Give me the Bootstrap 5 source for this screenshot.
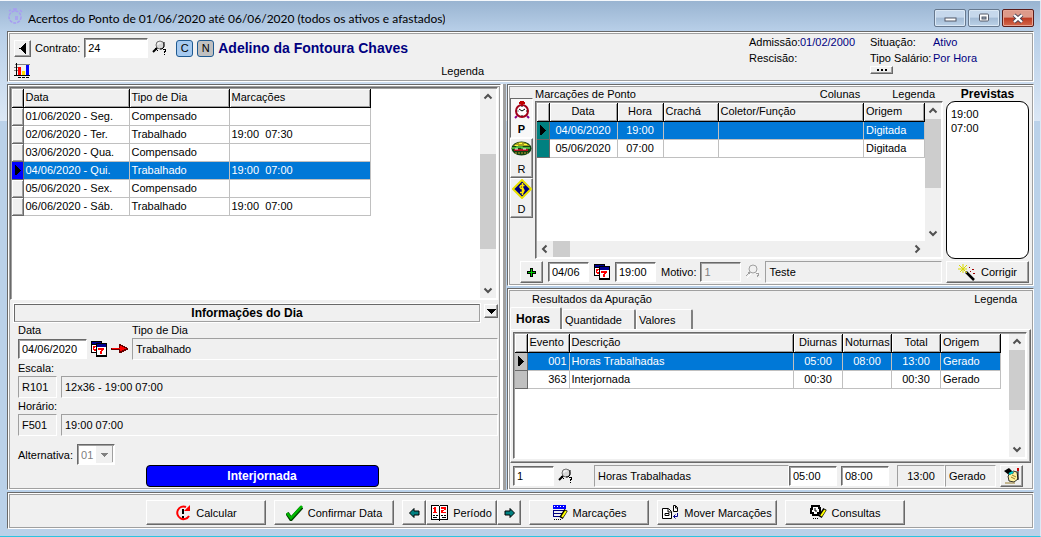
<!DOCTYPE html>
<html lang="pt-BR">
<head>
<meta charset="utf-8">
<meta name="viewport" content="width=device-width, initial-scale=1">
<title>Acertos do Ponto</title>
<link href="https://cdn.jsdelivr.net/npm/bootstrap@5.3.0/dist/css/bootstrap.min.css" rel="stylesheet">
<script src="https://cdn.jsdelivr.net/npm/bootstrap@5.3.0/dist/js/bootstrap.bundle.min.js" defer></script>
<style>
:root{--face:#f0f0f0;--mid:#a0a0a0;--dark:#696969;--sel:#0078d7}
body{font:11px/16px "Liberation Sans",Arial,sans-serif;color:#000;background:#bad1e9}
svg{display:block;flex:none}
.px{shape-rendering:crispEdges}
.win{min-height:100vh;gap:2px;padding:0 6px 7px 7px;border-top:1px solid #f4f8fc;border-bottom:1px solid #2bc4e0;border-right:1px solid #dce8f4;
 background:linear-gradient(#99b4d1 0,#b8cfe8 30px,#dbe7f5 120px,#bad1e9 120px)}
.titlebar{height:28px}
.titlebar h1{font:12px/16px Lato,"Noto Sans",sans-serif}
.caps{gap:2px;padding-top:6px}
.cap{width:32px;height:18px;padding:0;border:1px solid #66788e;border-radius:2px;box-shadow:inset 0 0 0 1px #dbe8f5;
 background:linear-gradient(#c6d8ec 45%,#a3bbd5 50%,#bcd2e8)}
.cap-x{border-color:#5c1d1a;box-shadow:inset 0 0 0 1px #e6a595;background:linear-gradient(#dd9a8a 45%,#bd3a22 50%,#d3694c)}
.panel{background:var(--face);border:1px solid;border-color:var(--dark) #fff #fff var(--dark);padding:2px;
 box-shadow:inset 1px 1px #fff,inset -1px -1px var(--mid),inset 2px 2px var(--mid)}
.navy{color:#000080}
.btn3d{background:var(--face);border:1px solid;border-color:#fff var(--dark) var(--dark) #fff;box-shadow:inset -1px -1px var(--mid);
 padding:0;color:#000;display:inline-flex;align-items:center;justify-content:center;gap:5px;flex:none}
.fld{height:20px;min-width:0;border:1px solid;border-color:var(--dark) #fff #fff var(--dark);box-shadow:inset 1px 1px var(--mid);
 border-radius:0;padding:0 3px;background:#fff;color:#000;outline-offset:-2px}
.fld.off{background:var(--face);color:#808080}
.ro{height:22px;min-width:0;background:var(--face);border:1px solid;border-color:var(--mid) #fff #fff var(--mid);padding:0 3px;color:#000}
.badge-key{width:17px;height:17px;line-height:15px;border:1px solid #1f5a91;border-radius:3px;text-align:center;background:#a6caf0;flex:none}
.badge-key.gray{background:#c0c0c0}
.person{font-size:14px;font-weight:700;line-height:18px}
.head-left{width:48%}
.facts{grid-template:16px 16px 13px/51px 70px 63px 98px}
.middle{display:grid;grid-template-columns:minmax(0,494fr) 6px minmax(0,527fr);flex:1 1 auto}
.split{background:var(--mid);border-left:2px solid #fff;margin-right:1px}
.stack{gap:2px}
.stack>.panel{flex:1 1 0}
.sunk{background:#fff;border:1px solid;border-color:var(--dark) #fff #fff var(--dark);box-shadow:inset 1px 1px var(--mid);padding:1px}
.dbgrid{border-collapse:collapse;table-layout:fixed;line-height:17px}
.dbgrid th{height:18px;background:var(--face);font-weight:400;border-right:1px solid #000;border-bottom:1px solid #000;padding:0 2px;
 box-shadow:inset 1px 1px #fff,inset -1px -1px var(--mid);white-space:nowrap;overflow:hidden}
.dbgrid td{height:18px;padding:0 2px;border-right:1px solid silver;border-bottom:1px solid silver;white-space:nowrap;overflow:hidden}
.dbgrid td:first-child{background:var(--face);border-color:var(--dark);padding:0;box-shadow:inset 1px 1px #fff,inset -1px -1px var(--mid)}
.dbgrid tr.on td:not(:first-child){background:var(--sel);color:#fff}
.dbgrid .teal td:first-child{background:#008080;box-shadow:none}
.dbgrid .blue td:first-child{background:#00f;box-shadow:none}
.dbgrid .silver td:first-child{background:silver;box-shadow:none}
.mark-row{margin-left:3px}
.sb{width:16px;background:var(--face);display:flex;flex-direction:column;align-items:center;flex:none}
.sb span{flex:1 1 auto;width:16px}
.sb i,.hsb i{display:block;background:#cdcdcd}
.sb svg{height:16px}
.hsb{height:16px;background:var(--face);display:flex;align-items:center}
.strip{width:23px;flex:none;padding-top:11px}
.strip .btn3d{width:23px;height:40px;flex-direction:column;gap:0;justify-content:space-between}
.strip .btn3d.down{background:#f8f8f8;border-color:var(--dark) #fff #fff var(--dark);box-shadow:none;font-weight:700}
.gridcol{min-width:0;margin-left:2px}
.toprow{line-height:14px}
.prev{width:83px;flex:none;margin:0 2px 0 3px}
.memo{border:1px solid #000;border-radius:9px;background:#fff;line-height:14px;padding:5px 4px;resize:none;width:100%;color:#000;overflow:hidden}
.entry{gap:5px;padding:2px 2px 0 10px}
.result{gap:4px;padding:2px 8px 0 3px}
.infobar{height:18px;border:1px solid;border-color:var(--dark) var(--mid) var(--mid) var(--dark);box-shadow:0 0 0 1px #fff;line-height:16px}
.strong{font-size:12px;font-weight:700}
.pill{background:#00f;color:#fff;border:1px solid #000;border-radius:4px;width:233px;height:22px;line-height:20px}
.reshead{padding:0 14px 0 22px}
.tabs button{background:var(--face);border:0;border-top:1px solid #fff;border-left:1px solid #fff;border-right:2px solid #808080;padding:0 2px;height:20px;text-align:left;color:#000;border-radius:2px 2px 0 0}
.tabs button.active{height:22px;font-weight:700;font-size:12px;padding-left:5px}
.tabpage{border:1px solid;border-color:#fff var(--dark) var(--dark) #fff;box-shadow:inset -1px -1px var(--mid);padding:2px 3px 3px 2px}
.combo{height:21px;width:38px;border:1px solid;border-color:var(--dark) #fff #fff var(--dark);box-shadow:inset 1px 1px var(--mid);border-radius:0;appearance:none;color:#808080;padding:0 3px;opacity:1;
 background:#fff url("data:image/svg+xml,%3Csvg xmlns='http://www.w3.org/2000/svg' width='17' height='17' shape-rendering='crispEdges'%3E%3Cpath fill='%23f0f0f0' d='M0 0h17v17H0z'/%3E%3Cpath fill='%23a0a0a0' d='M0 16h17V0h-1v16z'/%3E%3Cpath fill='%23808080' d='M5 7h7L8.500 11z'/%3E%3C/svg%3E") right 1px center no-repeat}
.footbar{padding:7px 2px 3px 12px}
.act{width:120px;height:25px}
.nudge{width:24px;height:25px}
.per{width:71px;height:25px}
.w-hdr{width:64px}.w-day{width:41px}.w-date{width:69px}.w-code{width:39px}.w-hour{width:48px}.w-org{width:51px}
.sq{width:23px;height:22px}
</style>
</head>
<body>
<svg width="0" height="0" class="position-absolute" aria-hidden="true">
 <symbol id="mag" viewBox="0 0 16 16"><circle cx="8" cy="5" r="4" fill="#d8d8d8" stroke="#707070"/><path d="M6 5V3h3" stroke="#fff" fill="none"/><path d="M12 2v5l-2 2H8" stroke="#000" fill="none"/><path d="M5 8l-4 4" stroke="#000" stroke-width="2"/><path d="M3 8l3 3" stroke="#000"/><path d="M11 9h3v3h-1v1h-1v-2h1v-1h-2zM12 14h1v1h-1z"/></symbol>
 <symbol id="magoff" viewBox="0 0 16 16"><circle cx="8" cy="5" r="4" fill="#f0f0f0" stroke="#a0a0a0"/><path d="M5 8l-4 4m2-4l3 3" stroke="#a0a0a0" fill="none"/><path d="M11 9h3v3h-1v1h-1v-2h1v-1h-2z" fill="#a0a0a0"/><path d="M12 9l1-2M2 14l4-4m7 5h3" stroke="#fff"/></symbol>
 <symbol id="cal" viewBox="0 0 16 16"><path d="M0 0h11v12H0z"/><path d="M1 4h4v7H1z" fill="#fff"/><path d="M1 1h9v2H1z" fill="#000090"/><path d="M2 5h3v1H4v1H3v1h2v2H3V9H2z" fill="red"/><path d="M5 2h11v14H5z"/><path d="M6 3h9v3H6z" fill="#000090"/><path d="M6 6h9v8H6z" fill="#fff"/><path d="M7 7h6v2h-1v1h-1v3H9v-3h1V9H7z" fill="red"/></symbol>
 <symbol id="up" viewBox="0 0 16 16"><path d="M4.500 9.500L8 6l3.500 3.500" fill="none" stroke="#505050" stroke-width="2"/></symbol>
 <symbol id="dn" viewBox="0 0 16 16"><path d="M4.500 6.500L8 10l3.500-3.500" fill="none" stroke="#505050" stroke-width="2"/></symbol>
 <symbol id="cur" viewBox="0 0 6 12"><path d="M0 1h1v1h1v1h1v1h1v1h1v1h1v1H5v1H4v1H3v1H2v1H0z"/></symbol>
</svg>
<div class="win d-flex flex-column">
 <div class="titlebar d-flex align-items-center gap-1">
  <svg width="17" height="17" viewBox="0 0 17 17" fill="none" stroke="#a79cf2" stroke-width="1.500"><circle cx="8" cy="10" r="6" stroke-dasharray="3 1"/><path d="M6 2h4M8 2v2M2 4l2-1M13 3l2 2M8 10h3M8 12h3"/></svg>
  <h1 class="mb-0 me-auto text-truncate pt-2">Acertos do Ponto de 01/06/2020 até 06/06/2020 (todos os ativos e afastados)</h1>
  <div class="caps d-flex">
   <button class="cap" aria-label="Minimizar"><svg class="m-auto" width="13" height="10"><rect x="1" y="5" width="11" height="3" fill="#fff" stroke="#555a68"/></svg></button>
   <button class="cap" aria-label="Maximizar"><svg class="m-auto" width="12" height="10"><rect x="1.500" y="1" width="9" height="7" rx="1" fill="#fff" stroke="#555a68"/><rect x="4" y="4" width="4" height="2" fill="#9ab" stroke="#555a68"/></svg></button>
   <button class="cap cap-x" aria-label="Fechar"><svg class="m-auto" width="14" height="11"><path d="M3 2l8 7M11 2L3 9" stroke="#4d4454" stroke-width="4"/><path d="M3 2l8 7M11 2L3 9" stroke="#fff" stroke-width="2.300"/></svg></button>
  </div>
 </div>

 <header class="panel d-flex">
  <div class="head-left d-flex flex-column ps-1">
   <div class="d-flex align-items-center pt-1">
    <button class="btn3d me-1" style="width:17px;height:17px" aria-label="Anterior"><svg class="px" width="7" height="11"><path d="M7 0v11H6v-1H5V9H4V8H3V7H2V6H0V5h2V4h1V3h1V2h1V1h1V0z"/></svg></button>
    <label for="contrato" class="me-1">Contrato:</label>
    <input id="contrato" class="fld w-hdr" value="24">
    <svg class="me-2 ms-1" width="16" height="16"><use href="#mag"/></svg>
    <span class="badge-key me-1">C</span><span class="badge-key gray me-1">N</span>
    <span class="person navy text-nowrap">Adelino da Fontoura Chaves</span>
   </div>
   <div class="d-flex justify-content-between mt-auto">
    <svg class="px mt-1" width="16" height="16"><path d="M1 1h15v1H1zM0 4h4v1H0zM0 7h4v1H0z" fill="#808080"/><path d="M2 0h1v13H2zM0 12h16v1H0zM4 14h3v1H4zM8 14h3v1H8zM12 14h3v1h-3z"/><path d="M4 4h3v8H4z" fill="red"/><path d="M8 8h3v4H8z" fill="#ffe000"/><path d="M12 2h3v10h-3z" fill="#00f"/></svg>
    <span class="pt-1 me-3">Legenda</span>
   </div>
  </div>
  <dl class="facts ms-auto mb-0 d-grid">
   <dt class="fw-normal">Admissão:</dt><dd class="mb-0 navy">01/02/2000</dd><dt class="fw-normal">Situação:</dt><dd class="mb-0 navy">Ativo</dd>
   <dt class="fw-normal">Rescisão:</dt><dd class="mb-0"></dd><dt class="fw-normal text-nowrap">Tipo Salário:</dt><dd class="mb-0 navy">Por Hora</dd>
   <dt></dt><dd class="mb-0"></dd><dt class="d-flex"><button class="btn3d" style="width:23px;height:8px" aria-label="Mais"><svg class="px" width="10" height="2"><path d="M0 0h2v2H0zM4 0h2v2H4zM8 0h2v2H8z"/></svg></button></dt><dd class="mb-0"></dd>
  </dl>
 </header>

 <main class="middle">
  <section class="panel d-flex flex-column">
   <div class="sunk d-flex flex-fill">
    <div class="flex-fill">
     <table class="dbgrid">
      <colgroup><col style="width:11px"><col style="width:106px"><col style="width:100px"><col style="width:141px"></colgroup>
      <thead><tr><th></th><th>Data</th><th>Tipo de Dia</th><th>Marcações</th></tr></thead>
      <tbody>
      <tr><td></td><td>01/06/2020 - Seg.</td><td>Compensado</td><td></td></tr>
      <tr><td></td><td>02/06/2020 - Ter.</td><td>Trabalhado</td><td>19:00&nbsp; 07:30</td></tr>
      <tr><td></td><td>03/06/2020 - Qua.</td><td>Compensado</td><td></td></tr>
      <tr class="on blue"><td><svg class="px mark-row" width="6" height="12"><use href="#cur"/></svg></td><td>04/06/2020 - Qui.</td><td>Trabalhado</td><td>19:00&nbsp; 07:00</td></tr>
      <tr><td></td><td>05/06/2020 - Sex.</td><td>Compensado</td><td></td></tr>
      <tr><td></td><td>06/06/2020 - Sáb.</td><td>Trabalhado</td><td>19:00&nbsp; 07:00</td></tr>
      </tbody>
     </table>
    </div>
    <div class="sb"><svg width="16"><use href="#up"/></svg><span class="d-flex flex-column"><b style="flex:50"></b><i style="flex:98"></i><b style="flex:34"></b></span><svg width="16"><use href="#dn"/></svg></div>
   </div>
   <div class="d-flex gap-1 pt-1 ps-1">
    <div class="infobar strong flex-fill text-center">Informações do Dia</div>
    <button class="btn3d" style="width:14px;height:14px" aria-label="Recolher"><svg class="px" width="9" height="5"><path d="M0 0h9v1H8v1H7v1H6v1H5v1H4V4H3V3H2V2H1V1H0z"/></svg></button>
   </div>
   <div class="ps-2">
    <div class="d-flex"><label for="data" style="width:114px">Data</label><label for="tipo">Tipo de Dia</label></div>
    <div class="d-flex align-items-center">
     <input id="data" class="fld w-date me-1" value="04/06/2020">
     <svg class="px me-1" width="16" height="16"><use href="#cal"/></svg>
     <svg class="px me-1" width="17" height="10"><path d="M0 4h8V0h2v1h2v1h2v1h2v1h1v2h-2v1h-2v1h-2v1H8V6H0z" fill="#600"/><path d="M1 4h8V2h2v1h2v1h2v1h-2v1h-2v1H9V5H1z" fill="red"/></svg>
     <input id="tipo" class="ro flex-fill" value="Trabalhado" readonly>
    </div>
    <label for="esc" class="d-block">Escala:</label>
    <div class="d-flex gap-1"><input id="esc" class="ro w-code" value="R101" readonly><input aria-label="Descrição da escala" class="ro flex-fill" value="12x36 - 19:00 07:00" readonly></div>
    <label for="hor" class="d-block">Horário:</label>
    <div class="d-flex gap-1"><input id="hor" class="ro w-code" value="F501" readonly><input aria-label="Descrição do horário" class="ro flex-fill" value="19:00 07:00" readonly></div>
    <div class="d-flex align-items-center pt-1 mt-1 gap-1"><label for="alt">Alternativa:</label><select id="alt" class="combo" disabled><option>01</option></select></div>
   </div>
   <div class="d-flex justify-content-center ps-3"><div class="pill strong text-center">Interjornada</div></div>
  </section>
  <div class="split"></div>
  <div class="stack d-flex flex-column">
   <section class="panel d-flex flex-column">
    <div class="d-flex flex-fill">
     <div class="strip">
      <button class="btn3d down"><svg width="18" height="20" viewBox="0 0 18 20"><path d="M4 17l-2 2M14 17l2 2" stroke="#808" stroke-width="2"/><circle cx="9" cy="12" r="6" fill="#fff" stroke="#a00018" stroke-width="2"/><path d="M6 4h6M7 3h4M9 3v3" stroke="#c00000" stroke-width="2"/><path d="M6 10l3 2 3-2M9 7v1M9 16v1M4.500 12h1M13 12h1" stroke="#000" fill="none"/></svg>P</button>
      <button class="btn3d"><svg width="21" height="18" viewBox="0 0 21 18"><ellipse cx="10.500" cy="9.500" rx="10" ry="7" fill="#104010"/><path d="M2 7q8-8 17 0z" fill="#a8a020"/><path d="M4 6h3v1H4zM8 4h3v1H8zM13 5h3v1h-3z" fill="#ff3"/><path d="M1 9h5v-1h5v1h8" stroke="#5fd34a" stroke-width="1.500" fill="none"/><path d="M3 11h14" stroke="#b01020" stroke-width="2"/><path d="M4 10h3M12 10h3" stroke="#fff"/><path d="M4 14h13" stroke="#c0a030" stroke-dasharray="2 1"/></svg>R</button>
      <button class="btn3d"><svg width="20" height="20" viewBox="0 0 20 20"><path d="M10 1l9 9-9 9-9-9z" fill="#000080" stroke="#e8e000" stroke-width="2"/><path d="M12.500 6.500H9l-1 1.500 1 1.500h2l1 2-1 2H8M10.500 4v12" stroke="#ffe800" stroke-width="1.500" fill="none"/></svg>D</button>
     </div>
     <div class="gridcol flex-fill d-flex flex-column">
      <div class="toprow d-flex"><span class="me-auto">Marcações de Ponto</span><span class="me-4">Colunas</span><span class="mx-2">Legenda</span></div>
      <div class="sunk flex-fill d-flex flex-column">
       <div class="d-flex flex-fill">
        <div class="flex-fill">
         <table class="dbgrid w-100">
          <colgroup><col style="width:12px"><col style="width:68px"><col style="width:46px"><col style="width:55px"><col><col style="width:61px"></colgroup>
          <thead><tr><th></th><th class="text-center">Data</th><th class="text-center">Hora</th><th>Crachá</th><th>Coletor/Função</th><th>Origem</th></tr></thead>
          <tbody>
          <tr class="on teal"><td><svg class="px mark-row" width="6" height="12"><use href="#cur"/></svg></td><td class="text-center">04/06/2020</td><td class="text-center">19:00</td><td></td><td></td><td>Digitada</td></tr>
          <tr class="teal"><td></td><td class="text-center">05/06/2020</td><td class="text-center">07:00</td><td></td><td></td><td>Digitada</td></tr>
          </tbody>
         </table>
        </div>
        <div class="sb"><svg width="16"><use href="#up"/></svg><span class="d-flex flex-column"><i style="flex:69"></i><b style="flex:37"></b></span><svg width="16"><use href="#dn"/></svg></div>
       </div>
       <div class="hsb"><svg width="16" height="16"><path d="M9.500 4.500L6 8l3.500 3.500" fill="none" stroke="#505050" stroke-width="2"/></svg><i style="width:17px;height:16px"></i><svg class="ms-auto me-3" width="16" height="16"><path d="M6.500 4.500L10 8l-3.500 3.500" fill="none" stroke="#505050" stroke-width="2"/></svg></div>
      </div>
     </div>
     <div class="prev d-flex flex-column"><label for="prev" class="toprow strong text-center">Previstas</label><textarea id="prev" class="memo flex-fill" readonly>19:00
07:00</textarea></div>
    </div>
    <div class="entry d-flex align-items-center">
     <button class="btn3d sq" aria-label="Incluir"><svg class="px" width="9" height="9"><path d="M3 0h3v3h3v3H6v3H3V6H0V3h3z"/><path d="M4 1h1v3h3v1H5v3H4V5H1V4h3z" fill="#0c0"/></svg></button>
     <input aria-label="Dia" class="fld w-day" value="04/06">
     <svg class="px" width="16" height="16"><use href="#cal"/></svg>
     <input aria-label="Hora" class="fld w-day" value="19:00">
     <div class="d-flex align-items-center flex-fill gap-1">
      <label for="mot">Motivo:</label><input id="mot" class="fld off w-day" value="1" disabled>
      <svg width="16" height="16"><use href="#magoff"/></svg>
      <input aria-label="Descrição do motivo" class="ro flex-fill" value="Teste" readonly>
      <button class="btn3d" style="width:83px;height:22px"><svg width="18" height="17"><path d="M8 8l8 8" stroke="#000" stroke-width="2.500"/><path d="M5 0v9M1 1l8 8M0 5h9M9 1L2 8" stroke="#d8d800"/><path d="M11 3h1v1h-1zM14 5h2v1h-2zM15 9h2v1h-2zM12 7h1v1h-1z" fill="#a00000"/></svg>Corrigir</button>
     </div>
    </div>
   </section>
   <section class="panel d-flex flex-column">
    <div class="reshead d-flex"><span class="me-auto">Resultados da Apuração</span><span>Legenda</span></div>
    <div class="tabs d-flex align-items-end"><button class="active" style="width:52px">Horas</button><button style="width:74px">Quantidade</button><button style="width:57px">Valores</button></div>
    <div class="tabpage flex-fill d-flex">
     <div class="sunk d-flex flex-fill">
      <div class="flex-fill pe-2">
       <table class="dbgrid w-100">
        <colgroup><col style="width:12px"><col style="width:42px"><col><col style="width:49px"><col style="width:49px"><col style="width:49px"><col style="width:60px"></colgroup>
        <thead><tr><th></th><th>Evento</th><th>Descrição</th><th class="text-center">Diurnas</th><th class="text-center">Noturnas</th><th class="text-center">Total</th><th>Origem</th></tr></thead>
        <tbody>
        <tr class="on silver"><td><svg class="px mark-row" width="6" height="12"><use href="#cur"/></svg></td><td class="text-end">001</td><td>Horas Trabalhadas</td><td class="text-center">05:00</td><td class="text-center">08:00</td><td class="text-center">13:00</td><td>Gerado</td></tr>
        <tr class="silver"><td></td><td class="text-end">363</td><td>Interjornada</td><td class="text-center">00:30</td><td></td><td class="text-center">00:30</td><td>Gerado</td></tr>
        </tbody>
       </table>
      </div>
      <div class="sb"><svg width="16"><use href="#up"/></svg><span class="d-flex flex-column"><i style="flex:60"></i><b style="flex:31"></b></span><svg width="16"><use href="#dn"/></svg></div>
     </div>
    </div>
    <div class="result d-flex align-items-center">
     <input aria-label="Evento" class="fld w-day" value="1">
     <svg class="me-3" width="16" height="16"><use href="#mag"/></svg>
     <div class="d-flex align-items-center flex-fill">
      <input aria-label="Descrição do evento" class="ro flex-fill" value="Horas Trabalhadas" readonly>
      <input aria-label="Diurnas" class="fld w-hour" value="05:00">
     </div>
     <input aria-label="Noturnas" class="fld w-hour me-1" value="08:00">
     <div class="d-flex">
      <input aria-label="Total" class="ro w-hour text-center" value="13:00" readonly><input aria-label="Origem" class="ro w-org" value="Gerado" readonly>
     </div>
     <button class="btn3d sq" aria-label="Editar"><svg width="16" height="16"><path d="M4 8l5-5 4 1 1 7-4 3-5-1z" fill="#fff3a0" stroke="#000" stroke-width=".8"/><path d="M0 3l5-3 5 5-5 2z" fill="#000"/><path d="M5 6l4-2" stroke="#0cc" stroke-width="2"/><path d="M14 0v3" stroke="#c00" stroke-width="2"/><path d="M14 3v9" stroke="#000"/><path d="M7 9l4 2M8 7l4 2M1 15h10" stroke="#806000" stroke-width=".8"/></svg></button>
    </div>
   </section>
  </div>
 </main>

 <footer class="footbar panel d-flex align-items-center justify-content-center gap-2">
  <button class="btn3d act"><svg width="16" height="16"><path d="M11 2A6.300 6.300 0 1 0 14 11" fill="none" stroke="red" stroke-width="2"/><path d="M9 6h6V0z" fill="red"/><path d="M7 4h2v5H7zM7 11h2v2H7z"/></svg>Calcular</button>
  <button class="btn3d act"><svg width="17" height="16"><path d="M1 8l4 6L16 2" stroke="#004000" stroke-width="4" fill="none"/><path d="M1 8l4 5L16 1" stroke="#00b800" stroke-width="2.500" fill="none"/></svg>Confirmar Data</button>
  <div class="d-flex">
   <button class="btn3d nudge" aria-label="Período anterior"><svg width="11" height="10"><path d="M.5 5L5 .5V3h5v4H5v2.500z" fill="#008080" stroke="#000"/></svg></button>
   <button class="btn3d per"><svg class="px" width="17" height="16"><path d="M0 0h8v1h1V0h8v15H9v1H8v-1H0z"/><path d="M1 1h7v13H1zM9 1h7v13H9z" fill="#fff"/><path d="M3 2h2v6H3zM2 3h1v1H2zM2 7h4v1H2zM10 2h5v3h-2v1h-1v1h3v1h-5V5h3V4h-3z" fill="red"/><path d="M2 10h2v1H2zM5 10h2v1H5zM2 12h4v1H2zM10 10h2v1h-2zM13 10h2v1h-2zM11 12h4v1h-4zM8 2h1v12H8z"/></svg>Período</button>
   <button class="btn3d nudge" aria-label="Próximo período"><svg width="11" height="10"><path d="M10.500 5L6 .5V3H1v4h5v2.500z" fill="#008080" stroke="#000"/></svg></button>
  </div>
  <button class="btn3d act"><svg width="16" height="16"><path d="M1 0h13v4H1z" fill="#00f"/><path d="M2 1.500h12" stroke="#fff" stroke-dasharray="1 2"/><path d="M1 5.500h12M1 8.500h10M1 11.500h8M1.500 5v6" stroke="#000080" fill="none"/><path d="M2 14.500h7" stroke="#000" stroke-dasharray="1 1"/><path d="M14 5l-5 8" stroke="#000" stroke-width="4"/><path d="M14 6l-4 6" stroke="#ff0" stroke-width="2"/></svg>Marcações</button>
  <button class="btn3d act"><svg width="17" height="16"><path d="M.5 3.500h6l3 3v7h-9zM6 4v3h3M3 8.500h4v2H3zM11.500.5h2l2 2v4h-4zM13.500 1v2h2" fill="#fff" stroke="#000"/><path d="M15.500 8v3.500h-4M13.500 9.500l-2 2 2 2" stroke="#000090" fill="none"/></svg>Mover Marcações</button>
  <button class="btn3d act"><svg width="17" height="16"><path d="M2 1h7v2h1v5H8v2H3V8H1V4h1z" fill="#fff" stroke="#000" stroke-width="2"/><path d="M5 3v3h2" stroke="#000" fill="none"/><path d="M3 13.500h6" stroke="#000" stroke-dasharray="1 1"/><path d="M15 4l-5 8" stroke="#000" stroke-width="4"/><path d="M15 5l-4 6" stroke="#ff0" stroke-width="2"/></svg>Consultas</button>
 </footer>
</div>
</body>
</html>
